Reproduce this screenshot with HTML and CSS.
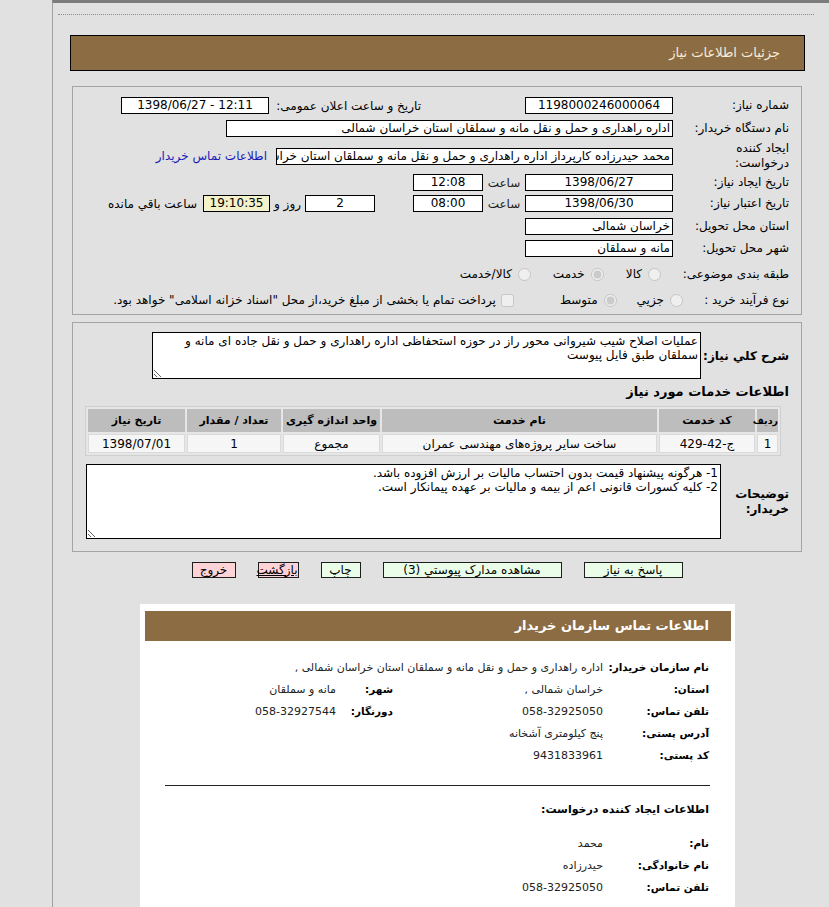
FILE: index.html
```html
<!DOCTYPE html>
<html lang="fa">
<head>
<meta charset="utf-8">
<title>جزئیات اطلاعات نیاز</title>
<link rel="stylesheet" href="styles.css">
</head>
<body>
<div class="page">
  <div class="gutter"></div>
  <div class="main">
    <div class="dots"></div>
    <div class="title-bar">جزئیات اطلاعات نیاز</div>

    <div class="panel form-panel">
      <div class="row r1">
        <div class="lbl">شماره نیاز:</div>
        <div class="box w148 gap-after">1198000246000064</div>
        <div class="lbl2">تاریخ و ساعت اعلان عمومی:</div>
        <div class="box w148 ltr">1398/06/27 - 12:11</div>
      </div>
      <div class="row r2">
        <div class="lbl">نام دستگاه خریدار:</div>
        <div class="box w447 txt">اداره راهداری و حمل و نقل مانه و سملقان استان خراسان شمالی</div>
      </div>
      <div class="row r3">
        <div class="lbl">ایجاد کننده<br>درخواست:</div>
        <div class="box w397 txt">محمد حیدرزاده کارپرداز اداره راهداری و حمل و نقل مانه و سملقان استان خراسان شمالی</div>
        <a class="link" href="#">اطلاعات تماس خریدار</a>
      </div>
      <div class="row r4">
        <div class="lbl">تاریخ ایجاد نیاز:</div>
        <div class="box w148">1398/06/27</div>
        <div class="saat">ساعت</div>
        <div class="box w70">12:08</div>
      </div>
      <div class="row r5">
        <div class="lbl">تاریخ اعتبار نیاز:</div>
        <div class="box w148">1398/06/30</div>
        <div class="saat">ساعت</div>
        <div class="box w70 gap-days">08:00</div>
        <div class="box w70">2</div>
        <div class="days">روز و</div>
        <div class="box w67 remain">19:10:35</div>
        <div class="remain-lbl">ساعت باقي مانده</div>
      </div>
      <div class="row r6">
        <div class="lbl">استان محل تحویل:</div>
        <div class="box w148 txt">خراسان شمالی</div>
      </div>
      <div class="row r7">
        <div class="lbl">شهر محل تحویل:</div>
        <div class="box w148 txt">مانه و سملقان</div>
      </div>
      <div class="row r8">
        <div class="lbl">طبقه بندی موضوعی:</div>
        <label class="opt o1"><input type="radio" name="cat" disabled><span>كالا</span></label>
        <label class="opt o2"><input type="radio" name="cat" checked disabled><span>خدمت</span></label>
        <label class="opt o3"><input type="radio" name="cat" disabled><span>كالا/خدمت</span></label>
      </div>
      <div class="row r9">
        <div class="lbl">نوع فرآیند خرید :</div>
        <label class="opt o1"><input type="radio" name="proc" disabled><span>جزیي</span></label>
        <label class="opt o2"><input type="radio" name="proc" checked disabled><span>متوسط</span></label>
        <label class="opt o3 chk"><input type="checkbox" disabled><span>پرداخت تمام یا بخشی از مبلغ خرید،از محل "اسناد خزانه اسلامی" خواهد بود.</span></label>
      </div>
    </div>

    <div class="panel desc-panel">
      <div class="row ra">
        <div class="lbl-b w88">شرح کلي نياز:</div>
        <textarea class="area a1" readonly>عملیات اصلاح شیب شیروانی محور راز در حوزه استحفاظی اداره راهداری و حمل و نقل جاده ای مانه و سملقان طبق فایل پیوست</textarea>
      </div>
      <div class="sec-title">اطلاعات خدمات مورد نیاز</div>
      <table class="grid">
        <thead>
          <tr>
            <th class="c1">ردیف</th>
            <th class="c2">کد خدمت</th>
            <th class="c3">نام خدمت</th>
            <th class="c4">واحد اندازه گیری</th>
            <th class="c5">تعداد / مقدار</th>
            <th class="c6">تاریخ نیاز</th>
          </tr>
        </thead>
        <tbody>
          <tr>
            <td>1</td>
            <td>ج-42-429</td>
            <td>ساخت سایر پروژه‌های مهندسی عمران</td>
            <td>مجموع</td>
            <td>1</td>
            <td>1398/07/01</td>
          </tr>
        </tbody>
      </table>
      <div class="row rc">
        <div class="lbl-b w68">توضیحات خریدار:</div>
        <textarea class="area a2" readonly>1- هرگونه پیشنهاد قیمت بدون احتساب مالیات بر ارزش افزوده باشد.
2- کلیه کسورات قانونی اعم از بیمه و مالیات بر عهده پیمانکار است.</textarea>
      </div>
    </div>

    <div class="buttons">
      <button class="btn green b-reply">پاسخ به نیاز</button>
      <button class="btn green b-docs">مشاهده مدارک پیوستي (3)</button>
      <button class="btn green b-print">چاپ</button>
      <button class="btn red b-back">بازگشت</button>
      <button class="btn red b-exit">خروج</button>
    </div>

    <div class="contact">
      <div class="contact-head">اطلاعات تماس سازمان خریدار</div>
      <div class="cgrid">
        <div class="cl">نام سازمان خریدار:</div>
        <div class="cv span3">اداره راهداری و حمل و نقل مانه و سملقان استان خراسان شمالی ,</div>
        <div class="cl">استان:</div>
        <div class="cv">خراسان شمالی ,</div>
        <div class="cl">شهر:</div>
        <div class="cv">مانه و سملقان</div>
        <div class="cl">تلفن تماس:</div>
        <div class="cv">058-32925050</div>
        <div class="cl">دورنگار:</div>
        <div class="cv">058-32927544</div>
        <div class="cl">آدرس پستی:</div>
        <div class="cv span3">پنج کیلومتری آشخانه</div>
        <div class="cl">کد پستی:</div>
        <div class="cv span3">9431833961</div>
      </div>
      <hr class="sep">
      <div class="sub-title">اطلاعات ایجاد کننده درخواست:</div>
      <div class="cgrid g2">
        <div class="cl">نام:</div>
        <div class="cv span3">محمد</div>
        <div class="cl">نام خانوادگی:</div>
        <div class="cv span3">حیدرزاده</div>
        <div class="cl">تلفن تماس:</div>
        <div class="cv span3">058-32925050</div>
      </div>
    </div>
  </div>
</div>
</body>
</html>
```

FILE: styles.css
```css
* { box-sizing: border-box; }
html, body { margin: 0; padding: 0; }
body {
  background: #e1e1e1;
  font-family: "DejaVu Sans", Tahoma, sans-serif;
  font-size: 12px;
  color: #000;
}
.page { display: flex; min-height: 907px; }
.gutter { width: 52px; flex: none; }
.main {
  flex: 1;
  border-left: 1px solid #a0a0a0;
  border-top: 3px solid #7c7c7c;
  direction: rtl;
}
.dots {
  margin: 11px 15px 0 5px;
  border-top: 1px dotted #8a8a8a;
}
.title-bar {
  margin: 20px 24px 0 17px;
  height: 36px;
  border: 1px solid #000;
  background: #8c6c42;
  color: #f6ecda;
  font-size: 13px;
  line-height: 34px;
  padding-right: 24px;
}
.panel {
  margin: 15px 27px 0 19px;
  border: 1px solid #a4a4a4;
  padding-right: 12px;
}
.form-panel { padding-top: 7px; padding-bottom: 4px; }
.row { display: flex; align-items: center; }
.r1, .r2 { height: 23px; }
.r3 { height: 32px; }
.r4, .r5 { height: 21px; }
.r6 { height: 24px; }
.r7 { height: 20px; }
.r8 { height: 32px; }
.r9 { height: 20px; }
.lbl { width: 116px; flex: none; line-height: 15px; }
.lbl2 { width: 152px; flex: none; }
.box {
  height: 17px;
  border: 1px solid #000;
  background: #fff;
  text-align: center;
  line-height: 15px;
  padding: 0 3px;
  white-space: nowrap;
  overflow: hidden;
  flex: none;
}
.box.txt { text-align: right; padding: 0 2px 0 0; }
.box.ltr { direction: ltr; }
.w148 { width: 148px; }
.w447 { width: 447px; }
.w397 { width: 397px; }
.w70 { width: 70px; }
.w67 { width: 67px; }
.gap-after { margin-left: 104px; }
.gap-days { margin-left: 38px; }
.link { color: #1a1ab8; text-decoration: none; margin-right: 9px; white-space: nowrap; }
.saat { width: 42px; text-align: center; color: #222; }
.days { width: 35px; padding-right: 4px; }
.remain { background: #f4f2cb; }
.remain-lbl { margin-right: 6px; }
.opt { display: flex; align-items: center; }
.opt input { margin: 0 0 0 6px; width: 13px; height: 13px; flex: none; }
.r8 .o1 { margin-right: 12px; }
.r8 .o2 { margin-right: 22px; }
.r8 .o3 { margin-right: 22px; }
.r9 .o1 { margin-right: -10px; }
.r9 .o2 { margin-right: 20px; }
.r9 .o3 { margin-right: 46px; }
.chk input { margin-left: 5px; }

.desc-panel { margin-top: 7px; padding-top: 9px; padding-bottom: 12px; }
.lbl-b { font-weight: bold; font-size: 12px; flex: none; }
.w88 { width: 88px; white-space: nowrap; }
.w68 { width: 68px; line-height: 15px; }
.area {
  display: block;
  border: 1px solid #000;
  background: #fff;
  font-family: "DejaVu Sans", Tahoma, sans-serif;
  font-size: 12px;
  line-height: 14px;
  padding: 1px 2px;
  margin: 0;
  direction: rtl;
  color: #000;
  outline: none;
}
.a1 { width: 549px; height: 47px; }
.a2 { width: 635px; height: 75px; }
.sec-title { font-weight: bold; font-size: 13px; margin: 3px 0 0; height: 20px; line-height: 20px; }
.grid {
  margin: 4px 8px 0 0;
  width: 695px;
  table-layout: fixed;
  border: 1px solid #cfcfcf;
  border-spacing: 2px;
  background: #e6e6e6;
  font-size: 12px;
}
.grid th {
  background: #bdbdbd;
  font-weight: bold;
  font-size: 11px;
  height: 23px;
  padding: 0;
  white-space: nowrap;
}
.grid th.c1 { font-size: 9.5px; }
.grid td {
  background: #f6f6f6;
  border: 1px solid #dadada;
  height: 19px;
  text-align: center;
  padding: 0;
}
.c1 { width: 21px; }
.c2 { width: 96px; }
.c3 { width: 275px; }
.c4 { width: 97px; }
.c5 { width: 94px; }
.c6 { width: 97px; }
.rc { margin-top: 8px; }

.buttons {
  display: flex;
  justify-content: center;
  gap: 22px;
  margin: 10px 27px 0 19px;
  height: 16px;
}
.btn {
  height: 16px;
  border: 1px solid #1e1e1e;
  font-family: "DejaVu Sans", Tahoma, sans-serif;
  font-size: 12px;
  line-height: 13px;
  padding: 0;
  color: #000;
  white-space: nowrap;
}
.green { background: #e9fde9; }
.red { background: #fdd3d8; }
.b-reply { width: 99px; }
.b-docs { width: 179px; }
.b-print { width: 40px; }
.b-back { width: 41px; text-decoration: underline; overflow: visible; }
.b-exit { width: 44px; }

.contact {
  margin: 26px 94px 0 87px;
  background: #fff;
  padding: 7px 4px 20px 5px;
  min-height: 303px;
}
.contact-head {
  height: 30px;
  background: #8c6c42;
  color: #fff;
  font-weight: bold;
  font-size: 13px;
  line-height: 30px;
  padding-right: 22px;
}
.cgrid {
  display: grid;
  grid-template-columns: 106px 210px 57px auto;
  grid-auto-rows: 22px;
  align-items: center;
  padding-right: 22px;
  margin-top: 15px;
}
.cl { font-weight: bold; font-size: 10.5px; white-space: nowrap; }
.cv { font-size: 11px; color: #222; white-space: nowrap; }
.span3 { grid-column: span 3; }
.sep {
  margin: 19px 21px 0 20px;
  border: 0;
  border-top: 1px solid #222;
}
.sub-title { font-weight: bold; font-size: 11px; padding-right: 22px; margin-top: 16px; line-height: 15px; }
.g2 { margin-top: 15px; }
```
